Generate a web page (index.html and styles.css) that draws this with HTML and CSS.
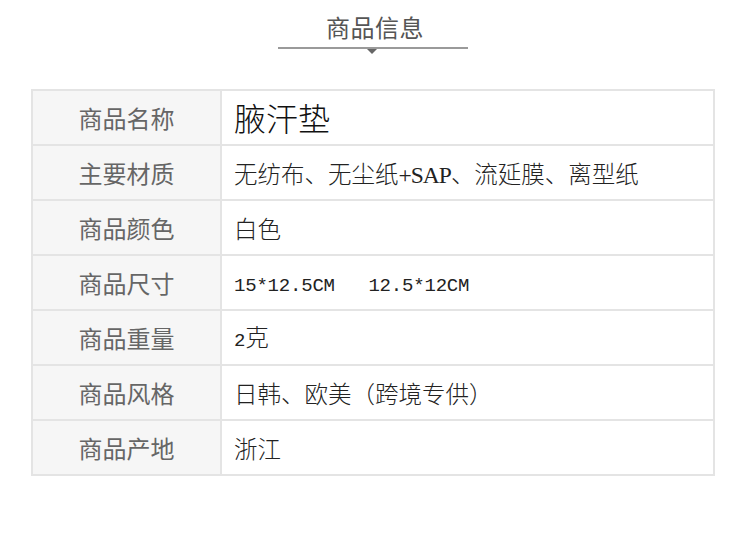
FILE: index.html
```html
<!DOCTYPE html>
<html lang="zh">
<head>
<meta charset="utf-8">
<link rel="stylesheet" href="styles.css">
</head>
<body>
<div class="page">
  <div class="heading">
    <div class="heading-text">商品信息</div>
    <div class="heading-line"><span class="arrow"></span></div>
  </div>
  <table class="info">
    <tr><th>商品名称</th><td class="big">腋汗垫</td></tr>
    <tr><th>主要材质</th><td>无纺布、无尘纸<span class="lat">+SAP</span>、流延膜、离型纸</td></tr>
    <tr><th>商品颜色</th><td>白色</td></tr>
    <tr><th>商品尺寸</th><td><span class="mono">15*12.5CM&nbsp;&nbsp;&nbsp;12.5*12CM</span></td></tr>
    <tr><th>商品重量</th><td><span class="mono">2</span>克</td></tr>
    <tr><th>商品风格</th><td>日韩、欧美（跨境专供）</td></tr>
    <tr><th>商品产地</th><td>浙江</td></tr>
  </table>
</div>
</body>
</html>
```

FILE: styles.css
```css
html, body {
  margin: 0;
  padding: 0;
  background: #fff;
}
.page {
  width: 750px;
  height: 542px;
  font-family: "Noto Sans CJK SC", "Noto Sans", sans-serif;
}
.heading {
  display: flex;
  flex-direction: column;
  align-items: center;
  padding-top: 11px;
}
.heading-text {
  font-size: 24px;
  line-height: 32px;
  color: #555;
  letter-spacing: 0.5px;
}
.heading-line {
  position: relative;
  width: 190px;
  height: 2px;
  background: #9a9a9a;
  margin-top: 4px;
  margin-left: -4px;
}
.arrow {
  position: absolute;
  left: 89px;
  top: 2px;
  width: 0;
  height: 0;
  border-left: 5px solid transparent;
  border-right: 5px solid transparent;
  border-top: 5px solid #666;
}
.info {
  margin: 40px 0 0 31px;
  width: 684px;
  border-collapse: collapse;
  border: 2px solid #e2e2e2;
}
.info th, .info td {
  border: 2px solid #e4e4e4;
  height: 53px;
  padding: 0;
  line-height: 30px;
}
.info th {
  width: 187px;
  background: #f6f6f6;
  font-weight: normal;
  font-size: 24px;
  color: #666;
  text-align: center;
}
.info td {
  background: #fff;
  height: 49px;
  padding: 4px 0 0 12px;
  font-size: 23.5px;
  color: #222;
  text-align: left;
  font-family: "Liberation Serif", "Noto Sans CJK SC", serif;
  font-weight: 300;
}
.info td.big {
  font-size: 32px;
  line-height: 40px;
  color: #111;
}
.lat {
  font-family: "Liberation Serif", serif;
  letter-spacing: -1px;
}
.mono {
  font-family: "Liberation Mono", monospace;
  font-size: 19px;
  letter-spacing: -0.2px;
}
```
